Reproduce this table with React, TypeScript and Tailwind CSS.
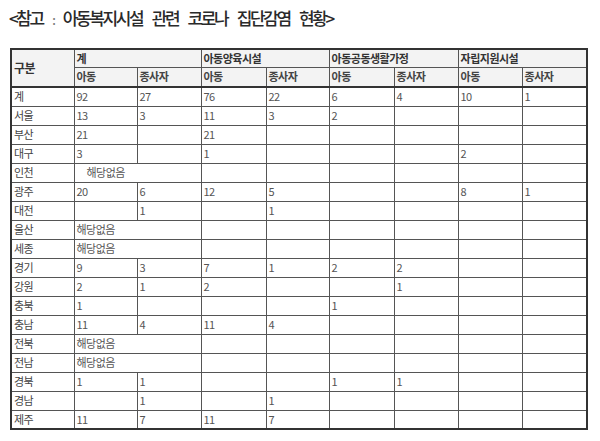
import React from 'react';

type Cell = string | null;

interface Row {
  region: string;
  cells: Cell[];
  none?: 'indent' | 'plain';
}

const rows: Row[] = [
  { region: '계', cells: ['92', '27', '76', '22', '6', '4', '10', '1'] },
  { region: '서울', cells: ['13', '3', '11', '3', '2', null, null, null] },
  { region: '부산', cells: ['21', null, '21', null, null, null, null, null] },
  { region: '대구', cells: ['3', null, '1', null, null, null, '2', null] },
  { region: '인천', cells: [], none: 'indent' },
  { region: '광주', cells: ['20', '6', '12', '5', null, null, '8', '1'] },
  { region: '대전', cells: [null, '1', null, '1', null, null, null, null] },
  { region: '울산', cells: [], none: 'plain' },
  { region: '세종', cells: [], none: 'plain' },
  { region: '경기', cells: ['9', '3', '7', '1', '2', '2', null, null] },
  { region: '강원', cells: ['2', '1', '2', null, null, '1', null, null] },
  { region: '충북', cells: ['1', null, null, null, '1', null, null, null] },
  { region: '충남', cells: ['11', '4', '11', '4', null, null, null, null] },
  { region: '전북', cells: [], none: 'plain' },
  { region: '전남', cells: [], none: 'plain' },
  { region: '경북', cells: ['1', '1', null, null, '1', '1', null, null] },
  { region: '경남', cells: [null, '1', null, '1', null, null, null, null] },
  { region: '제주', cells: ['11', '7', '11', '7', null, null, null, null] },
];

const groups = ['계', '아동양육시설', '아동공동생활가정', '자립지원시설'];
const widths = [63, 63, 64, 65, 63, 65, 64, 64, 65];

const td = 'border border-[#555] h-[19px] px-[2px] py-0 align-middle text-left leading-none';
const th = 'border border-[#555] px-[2px] py-0 align-middle text-left leading-none font-semibold text-[#333] bg-[#f3f3f3]';

export default function App() {
  return (
    <div className="w-[600px] h-[441px] bg-white overflow-hidden" style={{ fontFamily: '"Noto Sans CJK KR", "Noto Sans", sans-serif' }}>
      <h1 className="pl-[9px] pt-[6px] text-[17px] leading-[24px] font-medium tracking-[-2.4px] [word-spacing:8px] text-[#2a2a2a]">
        &lt;참고 <span className="text-[12px] text-[#777]">:</span> 아동복지시설 관련 코로나 집단감염 현황&gt;
      </h1>

      <table className="mt-[16px] ml-[10px] w-[576px] table-fixed border-collapse border-2 border-[#333] text-[11px] tracking-[-0.5px] text-[#555]">
        <colgroup>
          {widths.map((w, i) => (
            <col key={i} style={{ width: w }} />
          ))}
        </colgroup>
        <thead>
          <tr>
            <th rowSpan={2} className={th + ' border-b-2 border-b-[#333] text-[12px]'}>구분</th>
            {groups.map(g => (
              <th key={g} colSpan={2} className={th + ' h-[18px]'}>{g}</th>
            ))}
          </tr>
          <tr>
            {groups.map(g => (
              <React.Fragment key={g}>
                <th className={th + ' h-[20px] border-b-2 border-b-[#333] font-normal text-[#444]'}>아동</th>
                <th className={th + ' h-[20px] border-b-2 border-b-[#333] font-normal text-[#444]'}>종사자</th>
              </React.Fragment>
            ))}
          </tr>
        </thead>
        <tbody>
          {rows.map((r, ri) => (
            <tr key={r.region} className={ri === rows.length - 1 ? 'border-b-2 border-b-[#333]' : ''}>
              <td className={td + ' text-[#444]'}>{r.region}</td>
              {r.none ? (
                <>
                  <td colSpan={2} className={td + (r.none === 'indent' ? ' pl-[12px]' : '')}>해당없음</td>
                  {[0, 1, 2, 3, 4, 5].map(i => (
                    <td key={i} className={td}></td>
                  ))}
                </>
              ) : (
                r.cells.map((c, i) => (
                  <td key={i} className={td}>{c ?? ''}</td>
                ))
              )}
            </tr>
          ))}
        </tbody>
      </table>
    </div>
  );
}
